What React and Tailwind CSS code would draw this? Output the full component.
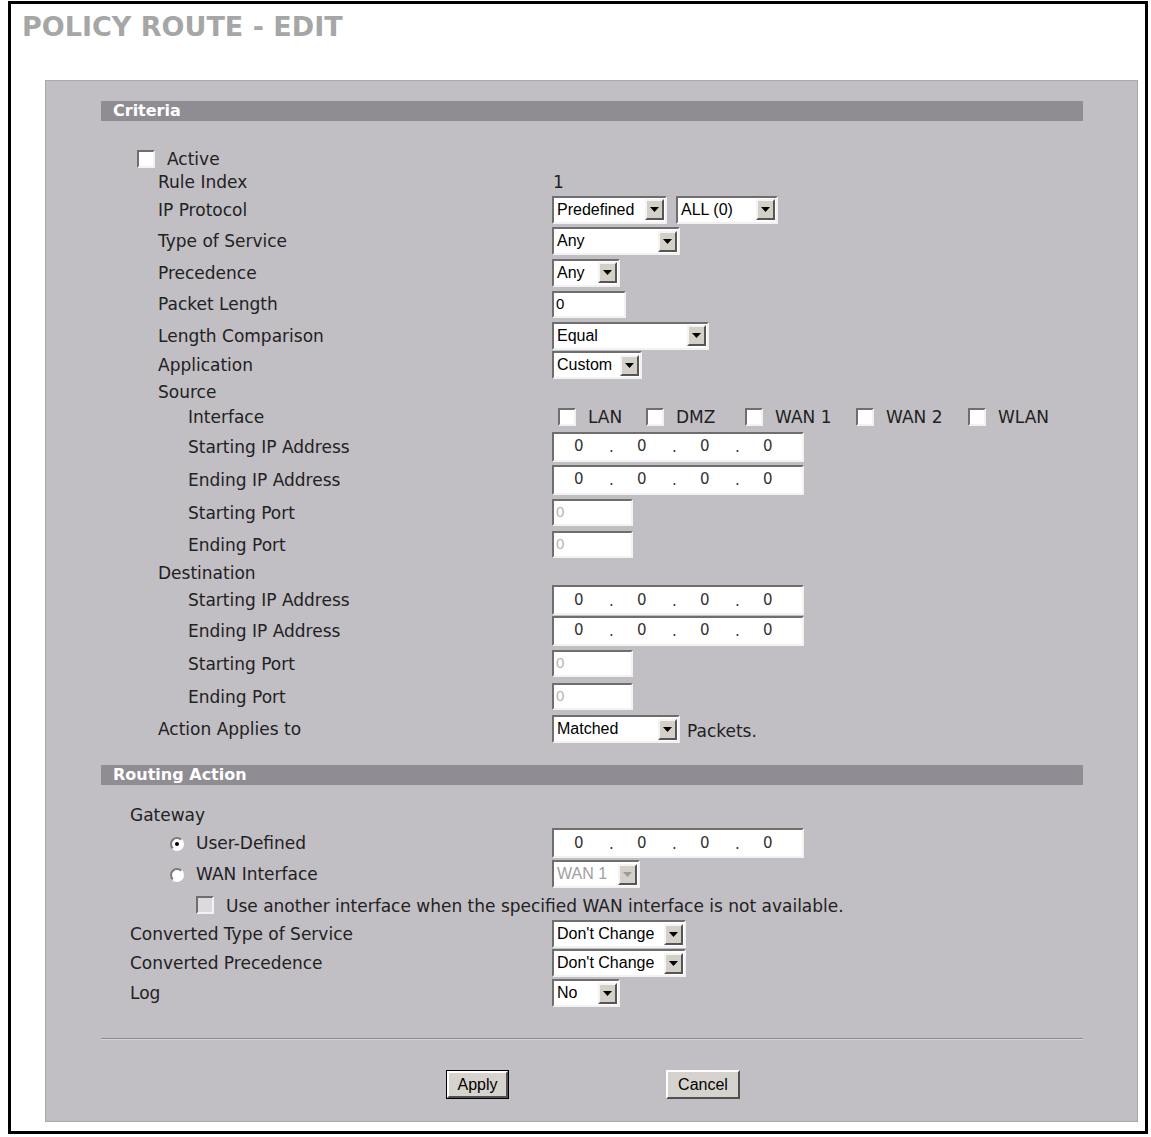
import React from "react";

const sunken =
  "border-2 border-t-[#6e6e6e] border-l-[#6e6e6e] border-r-[#f2f2f2] border-b-[#f2f2f2]";

const Arrow = ({ disabled }) => (
  <div className="ml-auto mr-[1px] flex h-[21px] w-[19px] shrink-0 items-center justify-center border-2 border-t-[#f4f4f4] border-l-[#f4f4f4] border-r-[#555] border-b-[#555] bg-[#d4d0c8]">
    <svg width="9" height="5" viewBox="0 0 9 5">
      <polygon points="0,0 9,0 4.5,5" fill={disabled ? "#9a9a9a" : "#000"} />
    </svg>
  </div>
);

const Select = ({ className, value, disabled }) => (
  <div className={`flex h-[28px] items-center bg-white ${sunken} ${className}`}>
    <span
      className={`truncate pl-[3px] font-['Liberation_Sans',Arial,sans-serif] text-[16px] ${
        disabled ? "text-[#a0a0a0]" : "text-black"
      }`}
    >
      {value}
    </span>
    <Arrow disabled={disabled} />
  </div>
);

const Checkbox = ({ disabled }) => (
  <div
    className={`h-[18px] w-[18px] shrink-0 ${sunken} ${disabled ? "bg-[#dcdadf]" : "bg-white"}`}
  ></div>
);

const Radio = ({ checked }) => (
  <div className="flex h-[14px] w-[14px] shrink-0 items-center justify-center rounded-full border-2 border-t-[#7a7a7a] border-l-[#7a7a7a] border-r-white border-b-white bg-white">
    {checked && <div className="h-[4px] w-[4px] rounded-full bg-black"></div>}
  </div>
);

const IpBox = () => (
  <div className={`flex h-[30px] w-[252px] items-center bg-white pl-[20px] text-[15px] text-[#333] ${sunken}`}>
    {[0, 1, 2, 3].map((i) => (
      <React.Fragment key={i}>
        <span className="w-[35px]">0</span>
        {i < 3 && <span className="w-[28px] pt-[2px]">.</span>}
      </React.Fragment>
    ))}
  </div>
);

const PortBox = ({ className, dim }) => (
  <div
    className={`flex h-[27px] items-center bg-white pl-[2px] font-['Liberation_Sans',Arial,sans-serif] text-[15px] ${
      dim ? "text-[#b4b4b4]" : "text-black"
    } ${sunken} ${className}`}
  >
    0
  </div>
);

const Row = ({ h, pad, label, children }) => (
  <div className={`flex items-center ${h}`}>
    <div className={`w-[506px] shrink-0 pt-[2px] ${pad}`}>{label}</div>
    <div className="flex items-center">{children}</div>
  </div>
);

const Bar = ({ title, className }) => (
  <div
    className={`ml-[55px] h-[20px] w-[982px] bg-[#8f8c93] pl-[12px] text-[16px] font-bold leading-[20px] text-white ${className}`}
  >
    {title}
  </div>
);

const ifaces = [
  ["LAN", "w-[88px]"],
  ["DMZ", "w-[99px]"],
  ["WAN 1", "w-[111px]"],
  ["WAN 2", "w-[112px]"],
  ["WLAN", "w-[90px]"],
];

const App = () => {
  return (
    <div className="h-[1137px] w-[1151px] bg-white pt-[1px] pl-[8px] font-['DejaVu_Sans',Verdana,sans-serif] text-[17px] text-[#222]">
      <div className="h-[1133px] w-[1140px] border-[3px] border-black">
        <div className="mt-[7px] h-[32px] pl-[11px] text-[27px] font-bold leading-[32px] text-[#a6a6a6]">
          POLICY ROUTE - EDIT
        </div>

        <div className="ml-[34px] mt-[37px] h-[1042px] w-[1093px] border border-[#aaa7ad] bg-[#c1bec4] pt-[20px]">
          <Bar title="Criteria" />

          <div className="mt-[26px]">
            <div className="flex h-[23px] items-center pl-[91px]">
              <Checkbox />
              <span className="ml-[12px] pt-[2px]">Active</span>
            </div>
            <Row h="h-[24px]" pad="pl-[112px]" label="Rule Index">
              <span className="pl-[1px] pt-[2px]">1</span>
            </Row>
            <Row h="h-[31px]" pad="pl-[112px]" label="IP Protocol">
              <Select className="w-[115px]" value="Predefined" />
              <Select className="ml-[9px] w-[102px]" value="ALL (0)" />
            </Row>
            <Row h="h-[32px]" pad="pl-[112px]" label="Type of Service">
              <Select className="w-[128px]" value="Any" />
            </Row>
            <Row h="h-[31px]" pad="pl-[112px]" label="Precedence">
              <Select className="w-[68px]" value="Any" />
            </Row>
            <Row h="h-[32px]" pad="pl-[112px]" label="Packet Length">
              <PortBox className="w-[74px]" />
            </Row>
            <Row h="h-[31px]" pad="pl-[112px]" label="Length Comparison">
              <Select className="w-[157px]" value="Equal" />
            </Row>
            <Row h="h-[28px]" pad="pl-[112px]" label="Application">
              <Select className="w-[90px]" value="Custom" />
            </Row>
            <Row h="h-[25px]" pad="pl-[112px]" label="Source" />
            <Row h="h-[26px]" pad="pl-[142px]" label="Interface">
              <div className="ml-[6px] flex items-center">
                {ifaces.map(([name, w]) => (
                  <div key={name} className={`flex items-center ${w}`}>
                    <Checkbox />
                    <span className="ml-[12px] pt-[2px]">{name}</span>
                  </div>
                ))}
              </div>
            </Row>
            <Row h="h-[33px]" pad="pl-[142px]" label="Starting IP Address">
              <IpBox />
            </Row>
            <Row h="h-[33px]" pad="pl-[142px]" label="Ending IP Address">
              <IpBox />
            </Row>
            <Row h="h-[33px]" pad="pl-[142px]" label="Starting Port">
              <PortBox className="w-[81px]" dim />
            </Row>
            <Row h="h-[31px]" pad="pl-[142px]" label="Ending Port">
              <PortBox className="w-[81px]" dim />
            </Row>
            <Row h="h-[26px]" pad="pl-[112px]" label="Destination" />
            <Row h="h-[28px]" pad="pl-[142px]" label="Starting IP Address">
              <IpBox />
            </Row>
            <Row h="h-[33px]" pad="pl-[142px]" label="Ending IP Address">
              <IpBox />
            </Row>
            <Row h="h-[33px]" pad="pl-[142px]" label="Starting Port">
              <PortBox className="w-[81px]" dim />
            </Row>
            <Row h="h-[33px]" pad="pl-[142px]" label="Ending Port">
              <PortBox className="w-[81px]" dim />
            </Row>
            <Row h="h-[32px]" pad="pl-[112px]" label="Action Applies to">
              <Select className="w-[128px]" value="Matched" />
              <span className="ml-[7px] pt-[6px]">Packets.</span>
            </Row>
          </div>

          <Bar title="Routing Action" className="mt-[20px]" />

          <div className="mt-[17px]">
            <Row h="h-[26px]" pad="pl-[84px]" label="Gateway" />
            <Row
              h="h-[30px]"
              pad="pl-[124px]"
              label={
                <div className="flex items-center">
                  <Radio checked />
                  <span className="ml-[12px]">User-Defined</span>
                </div>
              }
            >
              <IpBox />
            </Row>
            <Row
              h="h-[32px]"
              pad="pl-[124px]"
              label={
                <div className="flex items-center">
                  <Radio />
                  <span className="ml-[12px]">WAN Interface</span>
                </div>
              }
            >
              <Select className="w-[88px]" value="WAN 1" disabled />
            </Row>
            <div className="flex h-[30px] items-center pl-[150px]">
              <Checkbox disabled />
              <span className="ml-[12px] pt-[3px]">
                Use another interface when the specified WAN interface is not available.
              </span>
            </div>
            <Row h="h-[28px]" pad="pl-[84px]" label="Converted Type of Service">
              <Select className="w-[134px]" value="Don't Change" />
            </Row>
            <Row h="h-[30px]" pad="pl-[84px]" label="Converted Precedence">
              <Select className="w-[134px]" value="Don't Change" />
            </Row>
            <Row h="h-[30px]" pad="pl-[84px]" label="Log">
              <Select className="w-[68px]" value="No" />
            </Row>
          </div>

          <div className="ml-[55px] mt-[30px] w-[982px] border-t border-b border-t-[#8c8990] border-b-[#d6d4d9]"></div>

          <div className="mt-[30px] flex font-['Liberation_Sans',Arial,sans-serif] text-[16px] text-black">
            <div className="ml-[400px] border border-black">
              <div className="flex h-[27px] w-[61px] items-center justify-center border-2 border-t-white border-l-white border-r-[#505050] border-b-[#505050] bg-[#d6d3ce]">
                Apply
              </div>
            </div>
            <div className="ml-[157px] flex h-[29px] w-[74px] items-center justify-center border-2 border-t-white border-l-white border-r-[#505050] border-b-[#505050] bg-[#d6d3ce]">
              Cancel
            </div>
          </div>
        </div>
      </div>
    </div>
  );
};

export default App;
